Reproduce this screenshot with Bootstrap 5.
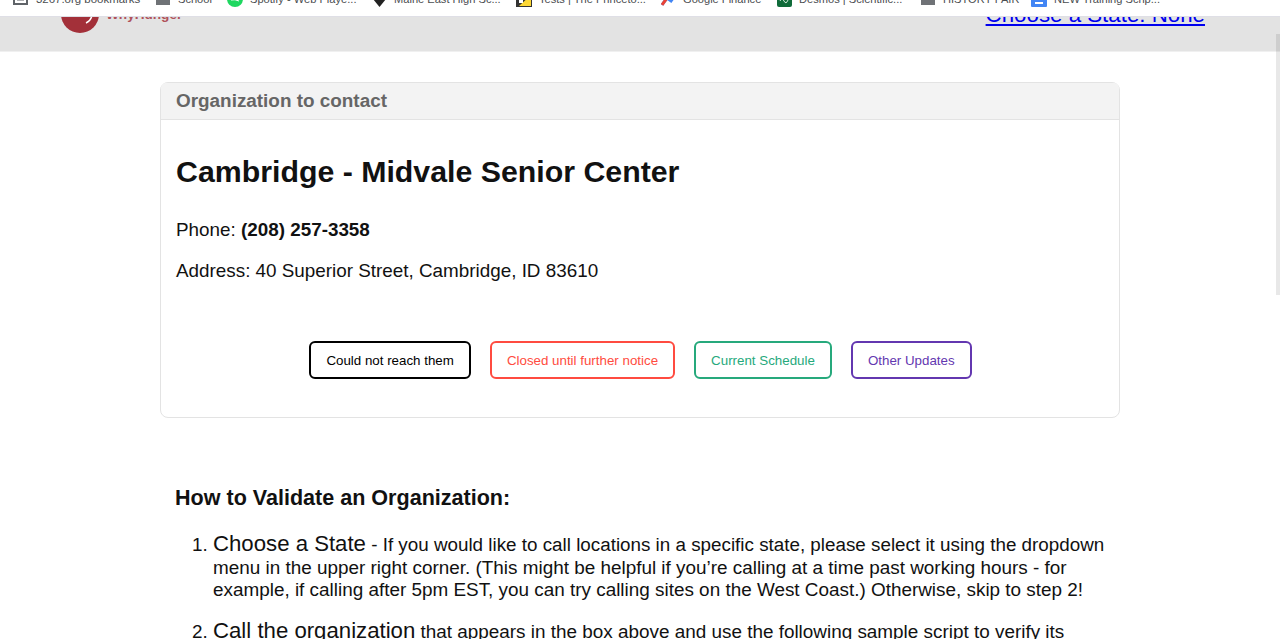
<!DOCTYPE html>
<html lang="en"><head><meta charset="utf-8">
<title>Validate</title>
<link href="https://cdn.jsdelivr.net/npm/bootstrap@5.3.0/dist/css/bootstrap.min.css" rel="stylesheet">
<style>
html,body{height:100%;overflow:hidden}
body{font-family:"Liberation Sans",Arial,sans-serif;color:#111;background:#fff}
.chrome-bar{height:17px;background:#fff;border-bottom:1px solid #dfdfe6;overflow:hidden;font-size:11.1px;color:#4a4d50;position:relative;z-index:2}
.mark-item{display:flex;align-items:center;white-space:nowrap;line-height:16px;position:absolute;top:-9px}
.mark-wide{font-size:11.45px}
.mark-item svg{position:absolute;top:0}
.topband{height:35px;background:#e3e3e3;border-bottom:1px solid #f0f0f0;padding:0 75px 0 61px;overflow:hidden}
.topband a{color:#00e;font-size:22.3px;line-height:26px;margin-top:-15px;display:block}
.logo-round{margin-top:-22px;display:block;flex:none}
.logo-words{color:#b0525a;font-size:13.6px;font-weight:700;margin:-10px 0 0 7px;line-height:16px}
.page-wrap{width:960px;margin:30px auto 0}
.org-panel{border-color:#e3e3e3;border-radius:8px}
.org-panel .card-header{background:#f3f3f3;color:#666;font-size:18.9px;font-weight:700;line-height:22px;padding:7px 15px;border-color:#e3e3e3}
.org-panel .card-body{padding:34px 15px 38px}
.org-name{font-size:30.3px;font-weight:700;line-height:35px;margin:0 0 30px}
.org-line{font-size:18.85px;line-height:22px;margin:0 0 19px}
.act-row{gap:18.7px;margin-top:59px;padding-left:1px}
.act-btn{background:#fff;border:2px solid;border-radius:6px;font-size:13.33px;line-height:15px;padding:10px 15.2px 9px}
.act-black{border-color:#000;color:#000}
.act-red{border-color:#ff4b40;color:#ff4b40}
.act-green{border-color:#26a97c;color:#26a97c}
.act-purple{border-color:#6337b0;color:#6337b0}
.guide{padding:0 15px;margin-top:67px;font-size:18.9px;line-height:22.5px}
.guide h2{font-size:21.55px;font-weight:700;line-height:26px;margin:0 0 22px}
.guide ol{padding-left:38px;margin:0}
.guide li{margin-bottom:18px}
.step-head{font-size:22.2px}
.step-lead{font-size:18.82px}
.scroll-thumb{position:fixed;right:0;top:34px;width:4px;height:261px;background:rgba(0,0,0,.09);z-index:3}
</style></head>
<body>
<div class="chrome-bar">
<span class="mark-item mark-wide" style="left:36px"><svg style="left:-23px" width="15" height="14"><rect x="1" y="1" width="13" height="12" fill="none" stroke="#5f6368" stroke-width="2"/><path d="M4 6h7M4 9h7" stroke="#5f6368"/></svg>3267.org bookmarks</span>
<span class="mark-item" style="left:178px"><svg style="left:-22px" width="14" height="14"><rect width="14" height="14" fill="#6f7276"/></svg>School</span>
<span class="mark-item" style="left:250px"><svg style="left:-23px" width="16" height="16"><circle cx="8" cy="8" r="8" fill="#1ed760"/><path d="M4 9q4-1 8 1" stroke="#fff" fill="none"/></svg>Spotify - Web Playe...</span>
<span class="mark-item" style="left:394px"><svg style="left:-22px" width="15" height="16"><path d="M1 0h13v8l-6.500 8L1 8z" fill="#222"/></svg>Maine East High Sc...</span>
<span class="mark-item" style="left:539px"><svg style="left:-23px" width="16" height="16"><rect width="16" height="16" fill="#333"/><path d="M3 15L15 4v11z" fill="#fdd835"/><rect x="3" y="5" width="4" height="7" fill="#fff"/></svg>Tests | The Princeto...</span>
<span class="mark-item" style="left:683px"><svg style="left:-22px" width="16" height="16"><path d="M1 14L6 7l4 3 5-7" fill="none" stroke="#4285f4" stroke-width="3"/><path d="M1 14L6 7" stroke="#ea4335" stroke-width="3"/></svg>Google Finance</span>
<span class="mark-item" style="left:799px"><svg style="left:-22px" width="15" height="16"><rect width="15" height="16" rx="2" fill="#0f6b3a"/><path d="M3 10q2-4 4 0t4-1" stroke="#cfe9d9" fill="none"/></svg>Desmos | Scientific...</span>
<span class="mark-item" style="left:943px"><svg style="left:-22px" width="14" height="14"><rect width="14" height="14" fill="#6f7276"/></svg>HISTORY FAIR</span>
<span class="mark-item" style="left:1054px"><svg style="left:-23px" width="16" height="16"><rect width="16" height="16" rx="1" fill="#4285f4"/><rect x="4" y="11" width="8" height="2" fill="#fff"/></svg>NEW Training Scrip...</span>
</div>
<div class="topband d-flex justify-content-between">
<div class="d-flex"><svg class="logo-round" width="38" height="38"><circle cx="19" cy="19" r="19" fill="#a33039"/><path d="M25 28q5-2 6-8" stroke="#fff" stroke-width="1.500" fill="none"/></svg><span class="logo-words">WhyHunger</span></div>
<a href="#">Choose a State: None</a>
</div>
<div class="page-wrap">
<div class="card org-panel">
<div class="card-header">Organization to contact</div>
<div class="card-body">
<h1 class="org-name">Cambridge - Midvale Senior Center</h1>
<p class="org-line">Phone: <b>(208) 257-3358</b></p>
<p class="org-line">Address: 40 Superior Street, Cambridge, ID 83610</p>
<div class="d-flex justify-content-center act-row">
<button class="act-btn act-black">Could not reach them</button>
<button class="act-btn act-red">Closed until further notice</button>
<button class="act-btn act-green">Current Schedule</button>
<button class="act-btn act-purple">Other Updates</button>
</div></div></div>
<div class="guide">
<h2>How to Validate an Organization:</h2>
<ol>
<li><span class="step-head">Choose a State</span> <span class="step-lead">- If you would like to call locations in a specific state, please select it using the dropdown</span> menu in the upper right corner. (This might be helpful if you’re calling at a time past working hours - for example, if calling after 5pm EST, you can try calling sites on the West Coast.) Otherwise, skip to step 2!</li>
<li><span class="step-head">Call the organization</span> that appears in the box above and use the following sample script to verify its</li>
</ol></div></div>
<div class="scroll-thumb"></div>
</body></html>
